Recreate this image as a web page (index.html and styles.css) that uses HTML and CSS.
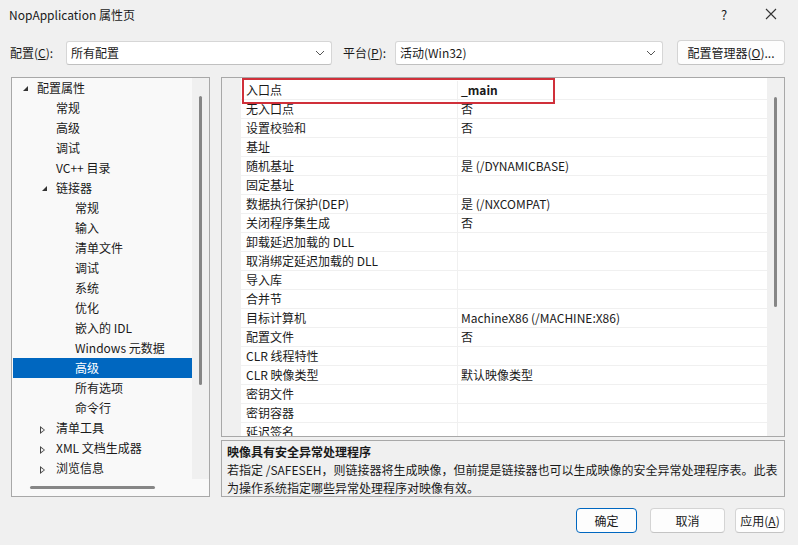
FILE: index.html
```html
<!doctype html>
<html lang="zh-CN">
  <head>
    <meta charset="utf-8">
    <title>NopApplication 属性页</title>
    <link rel="stylesheet" href="styles.css">
  </head>
  <body>
<div class="dialog">
  <div class="titlebar">
    <span class="title">NopApplication 属性页</span>
    <span class="tb-help">?</span>
    <span class="tb-close">
      <svg width="12" height="12" viewBox="0 0 12 12"><path d="M1 1 L11 11 M11 1 L1 11" stroke="#333" stroke-width="1.1" fill="none"/></svg>
    </span>
  </div>

  <div class="config-row">
    <span class="lbl lbl-config">配置(<u>C</u>):</span>
    <div class="combo combo-config">
      <span>所有配置</span>
      <svg width="10" height="6" viewBox="0 0 10 6"><path d="M1 1 L5 5 L9 1" stroke="#555" stroke-width="1" fill="none"/></svg>
    </div>
    <span class="lbl lbl-platform">平台(<u>P</u>):</span>
    <div class="combo combo-platform">
      <span>活动(Win32)</span>
      <svg width="10" height="6" viewBox="0 0 10 6"><path d="M1 1 L5 5 L9 1" stroke="#555" stroke-width="1" fill="none"/></svg>
    </div>
    <button class="btn btn-manager">配置管理器(<u>O</u>)...</button>
  </div>

  <div class="main">
    <div class="tree">
      <div class="tree-body">
        <ul class="tree-list">
          <li class="lv0"><span class="tw open"></span>配置属性</li>
          <li class="lv1">常规</li>
          <li class="lv1">高级</li>
          <li class="lv1">调试</li>
          <li class="lv1">VC++ 目录</li>
          <li class="lv1 has"><span class="tw open"></span>链接器</li>
          <li class="lv2">常规</li>
          <li class="lv2">输入</li>
          <li class="lv2">清单文件</li>
          <li class="lv2">调试</li>
          <li class="lv2">系统</li>
          <li class="lv2">优化</li>
          <li class="lv2">嵌入的 IDL</li>
          <li class="lv2">Windows 元数据</li>
          <li class="lv2 selected">高级</li>
          <li class="lv2">所有选项</li>
          <li class="lv2">命令行</li>
          <li class="lv1 has"><span class="tw closed"></span>清单工具</li>
          <li class="lv1 has"><span class="tw closed"></span>XML 文档生成器</li>
          <li class="lv1 has"><span class="tw closed"></span>浏览信息</li>
        </ul>
        <div class="vscroll"><div class="vthumb tree-thumb"></div></div>
      </div>
      <div class="hscroll"><div class="hthumb"></div></div>
    </div>

    <div class="right">
      <div class="grid">
        <div class="gutter"></div>
        <div class="rows">
          <div class="row highlight"><span class="name">入口点</span><span class="val bold">_main</span></div>
          <div class="row"><span class="name">无入口点</span><span class="val">否</span></div>
          <div class="row"><span class="name">设置校验和</span><span class="val">否</span></div>
          <div class="row"><span class="name">基址</span><span class="val"></span></div>
          <div class="row"><span class="name">随机基址</span><span class="val">是 (/DYNAMICBASE)</span></div>
          <div class="row"><span class="name">固定基址</span><span class="val"></span></div>
          <div class="row"><span class="name">数据执行保护(DEP)</span><span class="val">是 (/NXCOMPAT)</span></div>
          <div class="row"><span class="name">关闭程序集生成</span><span class="val">否</span></div>
          <div class="row"><span class="name">卸载延迟加载的 DLL</span><span class="val"></span></div>
          <div class="row"><span class="name">取消绑定延迟加载的 DLL</span><span class="val"></span></div>
          <div class="row"><span class="name">导入库</span><span class="val"></span></div>
          <div class="row"><span class="name">合并节</span><span class="val"></span></div>
          <div class="row"><span class="name">目标计算机</span><span class="val">MachineX86 (/MACHINE:X86)</span></div>
          <div class="row"><span class="name">配置文件</span><span class="val">否</span></div>
          <div class="row"><span class="name">CLR 线程特性</span><span class="val"></span></div>
          <div class="row"><span class="name">CLR 映像类型</span><span class="val">默认映像类型</span></div>
          <div class="row"><span class="name">密钥文件</span><span class="val"></span></div>
          <div class="row"><span class="name">密钥容器</span><span class="val"></span></div>
          <div class="row"><span class="name">延迟签名</span><span class="val"></span></div>
        </div>
        <div class="vscroll grid-scroll"><div class="vthumb grid-thumb"></div></div>
      </div>
      <div class="desc">
        <div class="desc-title">映像具有安全异常处理程序</div>
        <div class="desc-text">若指定 /SAFESEH，则链接器将生成映像，但前提是链接器也可以生成映像的安全异常处理程序表。此表为操作系统指定哪些异常处理程序对映像有效。</div>
      </div>
    </div>
  </div>

  <div class="buttons">
    <button class="btn btn-ok">确定</button>
    <button class="btn btn-cancel">取消</button>
    <button class="btn btn-apply">应用(<u>A</u>)</button>
  </div>
</div>
  </body>
</html>
```

FILE: styles.css
```css
html, body {
  margin: 0;
  width: 100%;
  height: 100%;
}
* {
  box-sizing: border-box;
}
body {
  background: #f0f0f0;
  font-family: "Noto Sans CJK SC", "Noto Sans", sans-serif;
  font-size: 12px;
  color: #1a1a1a;
}

.dialog {
  width: 798px;
  height: 545px;
  display: flex;
  flex-direction: column;
  background: #f0f0f0;
}

/* title bar */
.titlebar {
  height: 28px;
  display: flex;
  align-items: center;
  padding-left: 9px;
}
.title {
  flex-grow: 1;
  font-size: 12px;
}
.tb-help {
  width: 44px;
  text-align: center;
  font-size: 13px;
  margin-right: 3px;
}
.tb-close {
  width: 44px;
  display: flex;
  justify-content: center;
  margin-right: 5px;
}

/* config row */
.config-row {
  margin-top: 12px;
  height: 25px;
  display: flex;
  align-items: center;
  padding-left: 10px;
}
.lbl {
  white-space: nowrap;
}
.lbl-config {
  width: 56px;
}
.lbl-platform {
  width: 52px;
  margin-left: 11px;
}
.combo {
  height: 24px;
  background: #fff;
  border: 1px solid #d6d6d6;
  border-bottom-color: #c0c0c0;
  border-radius: 3px;
  display: flex;
  align-items: center;
  justify-content: space-between;
  padding: 0 6px 0 4px;
}
.combo-config {
  width: 266px;
}
.combo-platform {
  width: 268px;
}
.btn {
  font-family: inherit;
  font-size: 12px;
  color: #1a1a1a;
  background: #fdfdfd;
  border: 1px solid #d4d4d4;
  border-bottom-color: #c4c4c4;
  border-radius: 4px;
  height: 25px;
  padding: 0;
}
.btn-manager {
  margin-left: 14px;
  width: 108px;
}

/* main area */
.main {
  margin-top: 12px;
  margin-left: 11px;
  display: flex;
  gap: 11px;
  height: 420px;
}

.tree {
  width: 199px;
  border: 1px solid #a8a8a8;
  background: #f9f9f9;
  display: flex;
  flex-direction: column;
}
.tree-body {
  flex-grow: 1;
  display: flex;
  overflow: hidden;
}
.tree-list {
  list-style: none;
  margin: 0;
  padding: 0 0 0 1px;
  flex-grow: 1;
}
.tree-list li {
  height: 20px;
  line-height: 20px;
  white-space: nowrap;
}
.lv0 { padding-left: 24px; }
.lv1 { padding-left: 43px; }
.lv2 { padding-left: 62px; }
.tree-list li.selected {
  background: #0067c0;
  color: #fff;
}
.tw {
  display: inline-block;
  width: 0;
  height: 0;
  margin-right: 10px;
  vertical-align: middle;
  margin-left: -14px;
}
.tw.open {
  border-left: 5px solid transparent;
  border-bottom: 5px solid #333;
  margin-right: 9px;
  position: relative;
  top: -1px;
}
.tw.closed {
  width: 6px;
  height: 8px;
  position: relative;
}
.tw.closed::before {
  content: "";
  position: absolute;
  left: 0;
  top: 0;
  border-top: 4px solid transparent;
  border-bottom: 4px solid transparent;
  border-left: 5px solid #444;
}
.tw.closed::after {
  content: "";
  position: absolute;
  left: 1px;
  top: 2px;
  border-top: 2px solid transparent;
  border-bottom: 2px solid transparent;
  border-left: 3px solid #f9f9f9;
}
.lv1 .tw.closed {
  margin-left: -16px;
}

.vscroll {
  width: 17px;
  background: #f0f0f0;
  display: flex;
  justify-content: center;
  flex-shrink: 0;
}
.vthumb {
  width: 3px;
  background: #868686;
  border-radius: 2px;
}
.tree-thumb {
  margin-top: 18px;
  height: 289px;
}
.hscroll {
  height: 17px;
  background: #f9f9f9;
  display: flex;
  align-items: center;
  padding-left: 18px;
}
.hthumb {
  width: 125px;
  height: 3px;
  background: #868686;
  border-radius: 2px;
}

/* property grid */
.right {
  width: 564px;
  display: flex;
  flex-direction: column;
  gap: 3px;
}
.grid {
  height: 360px;
  border: 1px solid #a8a8a8;
  background: #fff;
  display: flex;
  overflow: hidden;
}
.gutter {
  width: 19px;
  background: #f0f0f0;
  flex-shrink: 0;
}
.rows {
  flex-grow: 1;
  padding-top: 3px;
}
.row {
  height: 19px;
  display: flex;
  border-bottom: 1px solid #f0f0f0;
}
.row .name {
  width: 217px;
  padding-left: 5px;
  line-height: 18px;
  border-right: 1px solid #f0f0f0;
  white-space: nowrap;
}
.row .val {
  padding-left: 3px;
  line-height: 18px;
  white-space: nowrap;
}
.val.bold {
  font-weight: bold;
}
.row.highlight {
  position: relative;
}
.row.highlight::after {
  content: "";
  position: absolute;
  left: 1px;
  top: -3px;
  width: 309px;
  height: 22px;
  border: 2px solid #d0303a;
}
.grid-scroll {
  width: 17px;
}
.grid-thumb {
  margin-top: 19px;
  height: 210px;
}

.desc {
  height: 57px;
  border: 1px solid #a8a8a8;
  background: #f0f0f0;
  padding: 2px 6px 0 5px;
}
.desc-title {
  font-weight: bold;
  line-height: 18px;
}
.desc-text {
  line-height: 18px;
}

/* bottom buttons */
.buttons {
  margin-top: 11px;
  display: flex;
  justify-content: flex-end;
  padding-right: 13px;
  gap: 13px;
}
.btn-ok {
  width: 61px;
  border-color: #0067c0;
}
.btn-cancel {
  width: 75px;
}
.btn-apply {
  width: 50px;
  margin-left: -3px;
}
```
